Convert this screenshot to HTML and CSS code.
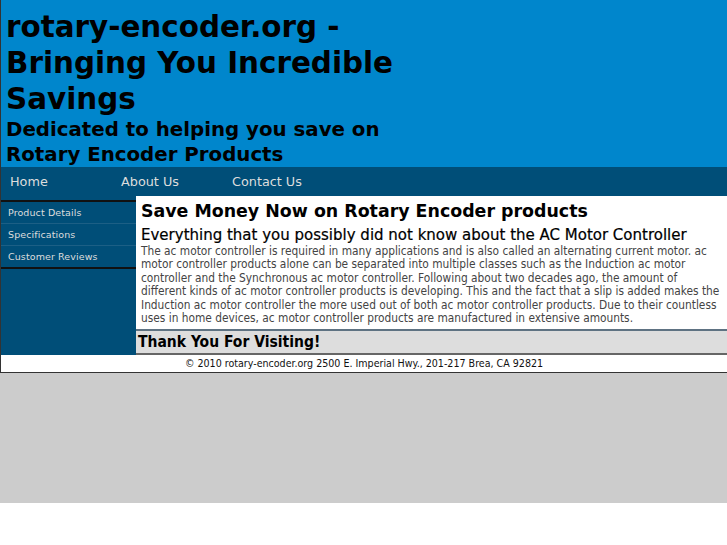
FILE: index.html
```html
<!DOCTYPE html>
<html>
<head>
<meta charset="utf-8">
<title>rotary-encoder.org</title>
<link rel="stylesheet" href="styles.css">
</head>
<body>
<div class="wrapper">
  <div class="header">
    <h1 class="site-title">rotary-encoder.org - Bringing You Incredible Savings</h1>
    <h2 class="site-tagline">Dedicated to helping you save on Rotary Encoder Products</h2>
  </div>
  <div class="nav">
    <a class="nav-link" href="#">Home</a>
    <a class="nav-link" href="#">About Us</a>
    <a class="nav-link" href="#">Contact Us</a>
  </div>
  <div class="main">
    <div class="sidebar">
      <ul class="side-menu">
        <li class="side-item"><a href="#">Product Details</a></li>
        <li class="side-item"><a href="#">Specifications</a></li>
        <li class="side-item"><a href="#">Customer Reviews</a></li>
      </ul>
    </div>
    <div class="content">
      <div class="article">
        <h1 class="article-title">Save Money Now on Rotary Encoder products</h1>
        <h2 class="article-sub">Everything that you possibly did not know about the AC Motor Controller</h2>
        <p class="article-text">The ac motor controller is required in many applications and is also called an alternating current motor. ac motor controller products alone can be separated into multiple classes such as the Induction ac motor controller and the Synchronous ac motor controller. Following about two decades ago, the amount of different kinds of ac motor controller products is developing. This and the fact that a slip is added makes the Induction ac motor controller the more used out of both ac motor controller products. Due to their countless uses in home devices, ac motor controller products are manufactured in extensive amounts.</p>
      </div>
      <div class="thanks">Thank You For Visiting!</div>
    </div>
  </div>
  <div class="footer">© 2010 rotary-encoder.org 2500 E. Imperial Hwy., 201-217 Brea, CA 92821</div>
</div>
</body>
</html>
```

FILE: styles.css
```css
html {
  background: #ffffff;
}
body {
  margin: 0;
  padding: 0 0 130px 0;
  background: #cccccc;
  font-family: "DejaVu Sans", Verdana, sans-serif;
}
.wrapper {
  border-left: 1px solid #333333;
  border-bottom: 1px solid #333333;
  background: #ffffff;
}
.header {
  background: #0086cc;
  padding: 9px 5px 0 5px;
}
.site-title {
  margin: 0;
  width: 400px;
  font-size: 29.4px;
  line-height: 36px;
  font-weight: bold;
  color: #000000;
}
.site-tagline {
  margin: 0;
  width: 400px;
  font-size: 19.8px;
  line-height: 25px;
  font-weight: bold;
  color: #000000;
}
.nav {
  background: #004e78;
  height: 29px;
  display: flex;
  align-items: center;
  padding-left: 9px;
}
.nav-link {
  width: 111px;
  color: #dddddd;
  text-decoration: none;
  font-size: 12.8px;
  margin-top: -1px;
}
.main {
  display: flex;
}
.sidebar {
  width: 135px;
  flex: none;
  background: #004e78;
  padding-top: 4px;
}
.side-menu {
  list-style: none;
  margin: 0;
  padding: 0;
  border-top: 2px solid #111111;
  border-bottom: 2px solid #111111;
}
.side-item {
  height: 21px;
  line-height: 21px;
  border-top: 1px solid #1c5f85;
  padding-left: 7px;
  font-size: 9.5px;
  letter-spacing: 0.1px;
}
.side-item:first-child {
  border-top: none;
}
.side-item a {
  color: #dddddd;
  text-decoration: none;
}
.content {
  flex: 1;
  display: flex;
  flex-direction: column;
  background: #ffffff;
}
.article {
  padding: 4px 6px 4px 5px;
  border-bottom: 2px solid #5e7282;
}
.article-title {
  margin: 0;
  font-size: 17.4px;
  line-height: 22px;
  font-weight: bold;
  color: #000000;
}
.article-sub {
  margin: 4px 0 0 0;
  font-size: 15px;
  line-height: 19px;
  font-weight: normal;
  color: #000000;
  -webkit-text-stroke: 0.2px #000000;
}
.article-text {
  margin: 0;
  font-family: "DejaVu Sans Condensed", "DejaVu Sans", sans-serif;
  font-size: 11.8px;
  line-height: 13.4px;
  color: #444444;
}
.thanks {
  background: #dddddd;
  border-bottom: 2px solid #666666;
  padding: 2px 2px 2px 2px;
  font-family: "DejaVu Sans Condensed", "DejaVu Sans", sans-serif;
  font-weight: bold;
  font-size: 15.5px;
  line-height: 18px;
  color: #000000;
}
.footer {
  text-align: center;
  font-family: "DejaVu Sans Condensed", "DejaVu Sans", sans-serif;
  font-size: 10.6px;
  line-height: 17px;
  color: #111111;
}
```
